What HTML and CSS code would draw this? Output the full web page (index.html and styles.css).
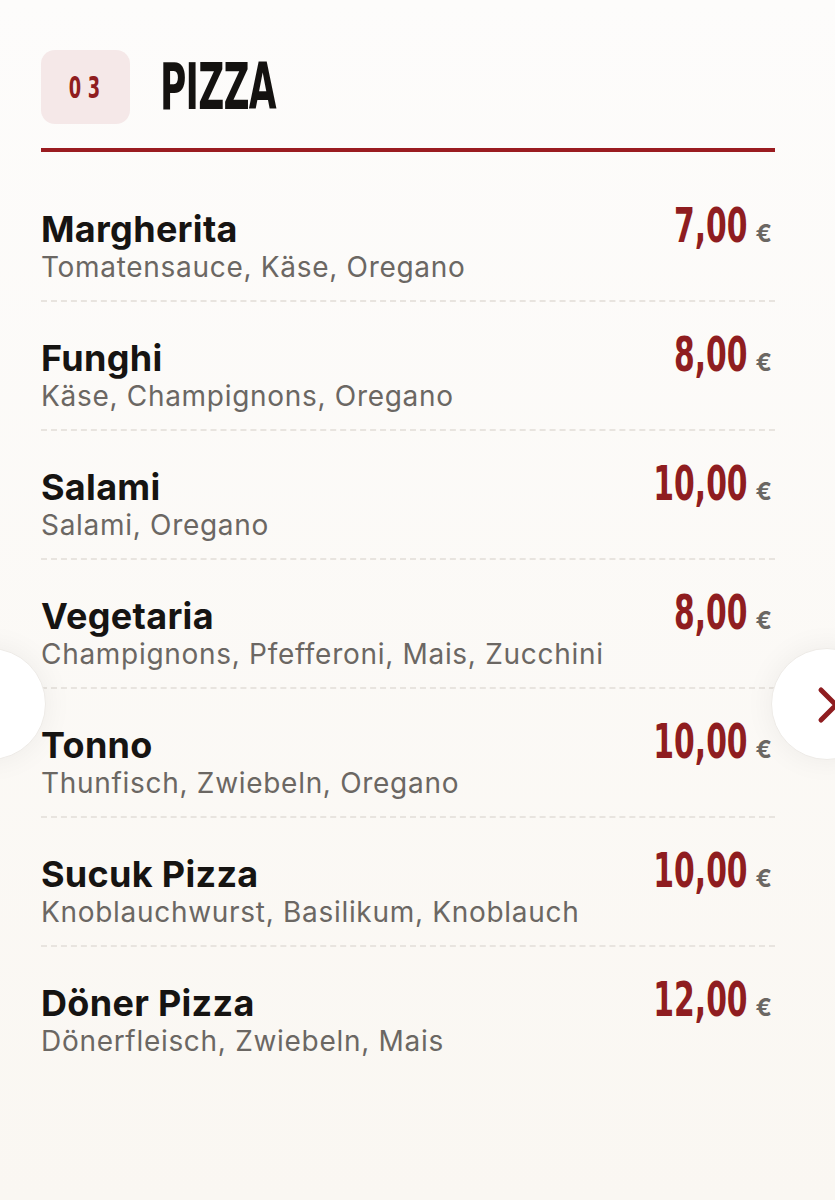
FILE: index.html
```html
<!DOCTYPE html>
<html lang="de">
<head>
    <meta charset="UTF-8">
    <meta name="viewport" content="width=device-width, initial-scale=1.0">
    <title>Pizza</title>
    <link rel="stylesheet" href="styles.css">
</head>
<body>
    <div class="menu">
        <!-- Kopf der Kategorie -->
        <div class="head">
            <div class="badge"><span>03</span></div>
            <h1 class="title">PIZZA</h1>
        </div>
        <div class="rule"></div>

        <ul class="items">
            <li class="item">
                <div class="info">
                    <div class="name">Margherita</div>
                    <div class="desc">Tomatensauce, Käse, Oregano</div>
                </div>
                <div class="price"><span class="amount">7,00</span><span class="eur">€</span></div>
            </li>
            <li class="item">
                <div class="info">
                    <div class="name">Funghi</div>
                    <div class="desc">Käse, Champignons, Oregano</div>
                </div>
                <div class="price"><span class="amount">8,00</span><span class="eur">€</span></div>
            </li>
            <li class="item">
                <div class="info">
                    <div class="name">Salami</div>
                    <div class="desc">Salami, Oregano</div>
                </div>
                <div class="price"><span class="amount">10,00</span><span class="eur">€</span></div>
            </li>
            <li class="item">
                <div class="info">
                    <div class="name">Vegetaria</div>
                    <div class="desc">Champignons, Pfefferoni, Mais, Zucchini</div>
                </div>
                <div class="price"><span class="amount">8,00</span><span class="eur">€</span></div>
            </li>
            <li class="item">
                <div class="info">
                    <div class="name">Tonno</div>
                    <div class="desc">Thunfisch, Zwiebeln, Oregano</div>
                </div>
                <div class="price"><span class="amount">10,00</span><span class="eur">€</span></div>
            </li>
            <li class="item">
                <div class="info">
                    <div class="name">Sucuk Pizza</div>
                    <div class="desc">Knoblauchwurst, Basilikum, Knoblauch</div>
                </div>
                <div class="price"><span class="amount">10,00</span><span class="eur">€</span></div>
            </li>
            <li class="item">
                <div class="info">
                    <div class="name">Döner Pizza</div>
                    <div class="desc">Dönerfleisch, Zwiebeln, Mais</div>
                </div>
                <div class="price"><span class="amount">12,00</span><span class="eur">€</span></div>
            </li>
        </ul>
    </div>

    <!-- Blättern -->
    <button class="nav nav-prev" aria-label="Zurück"></button>
    <button class="nav nav-next" aria-label="Weiter">
        <svg width="30" height="40" viewBox="0 0 30 40">
            <path d="M5 5 L20 20 L5 35" fill="none" stroke="#8f1d20" stroke-width="5" stroke-linecap="round" stroke-linejoin="round"/>
        </svg>
    </button>
</body>
</html>
```

FILE: styles.css
```css
body {
    margin: 0;
    min-height: 1200px;
    background: linear-gradient(to bottom, #fdfcfb, #faf7f2);
    font-family: Inter, "Noto Sans", sans-serif;
    color: #161412;
    overflow: hidden;
}

.menu {
    width: 734px;
    padding: 50px 0 0 41px;
}

.head {
    display: flex;
    align-items: center;
    gap: 30px;
}

.badge {
    width: 89px;
    height: 74px;
    border-radius: 14px;
    background-color: #f5e8e8;
    display: flex;
    align-items: center;
    justify-content: center;
}

.badge span {
    display: inline-block;
    font-family: "DejaVu Sans Condensed", "DejaVu Sans", sans-serif;
    font-weight: bold;
    font-size: 30px;
    letter-spacing: 10px;
    margin-right: -4px;
    color: #8f1d20;
    transform: scaleX(0.66);
}

.title {
    margin: 0;
    font-family: "DejaVu Sans Condensed", "DejaVu Sans", sans-serif;
    font-weight: bold;
    font-size: 50px;
    line-height: 1;
    letter-spacing: -1px;
    transform: scale(0.8, 1.28);
    transform-origin: left center;
    color: #141210;
}

.rule {
    height: 4px;
    margin-top: 24px;
    background-color: #9a1c20;
}

.items {
    list-style: none;
    margin: 21px 0 0;
    padding: 0;
}

.item {
    display: flex;
    justify-content: space-between;
    align-items: baseline;
    padding: 31px 0 16px;
    border-bottom: 2px dashed #e8e4df;
}

.item:last-child {
    border-bottom: none;
}

.name {
    font-size: 36px;
    font-weight: 700;
    line-height: 42px;
    letter-spacing: 0.3px;
}

.desc {
    font-size: 28px;
    line-height: 34px;
    letter-spacing: 0.7px;
    color: #6b6763;
}

.price {
    display: flex;
    align-items: baseline;
    padding-right: 3px;
}

.amount {
    display: inline-block;
    font-family: "DejaVu Sans Condensed", "DejaVu Sans", sans-serif;
    font-weight: bold;
    font-size: 48px;
    line-height: 42px;
    color: #8f1d20;
    transform: scaleX(0.69);
    transform-origin: right center;
}

.eur {
    font-size: 24px;
    font-weight: 700;
    color: #6b6763;
    margin-left: 8px;
}

.nav {
    position: absolute;
    top: 648px;
    width: 112px;
    height: 112px;
    border-radius: 50%;
    border: 1px solid #eeebe7;
    background-color: #fff;
    box-shadow: 0 0 30px rgba(0, 0, 0, 0.06);
    padding: 0;
}

.nav-prev {
    left: -66px;
}

.nav-next {
    left: 771px;
}

.nav-next svg {
    position: absolute;
    left: 44px;
    top: 36px;
}
```
